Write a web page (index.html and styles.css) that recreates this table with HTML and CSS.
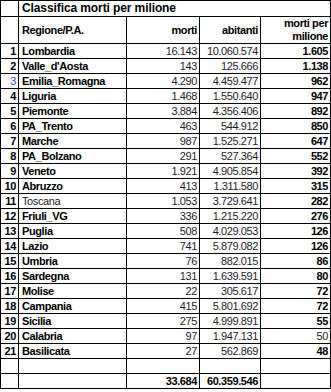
FILE: index.html
```html
<!DOCTYPE html>
<html lang="it">
<head>
<meta charset="utf-8">
<title>Classifica morti per milione</title>
<link rel="stylesheet" href="styles.css">
</head>
<body>
<table class="sheet">
  <colgroup>
    <col class="c-rank"><col class="c-name"><col class="c-morti"><col class="c-ab"><col class="c-pm">
  </colgroup>
  <tr class="title-row"><td class="blank"></td><td class="title" colspan="4">Classifica morti per milione</td></tr>
  <tr class="head-row">
    <td></td>
    <td class="b">Regione/P.A.</td>
    <td class="b num">morti</td>
    <td class="b num">abitanti</td>
    <td class="b num">morti per<br>milione</td>
  </tr>
  <tr><td class="rk">1</td><td class="b">Lombardia</td><td class="num">16.143</td><td class="num">10.060.574</td><td class="b num">1.605</td></tr>
  <tr><td class="rk">2</td><td class="b">Valle_d'Aosta</td><td class="num">143</td><td class="num">125.666</td><td class="b num">1.138</td></tr>
  <tr><td class="rk reg">3</td><td class="b">Emilia_Romagna</td><td class="num">4.290</td><td class="num">4.459.477</td><td class="b num">962</td></tr>
  <tr><td class="rk">4</td><td class="b">Liguria</td><td class="num">1.468</td><td class="num">1.550.640</td><td class="b num">947</td></tr>
  <tr><td class="rk">5</td><td class="b">Piemonte</td><td class="num">3.884</td><td class="num">4.356.406</td><td class="b num">892</td></tr>
  <tr><td class="rk">6</td><td class="b">PA_Trento</td><td class="num">463</td><td class="num">544.912</td><td class="b num">850</td></tr>
  <tr><td class="rk">7</td><td class="b">Marche</td><td class="num">987</td><td class="num">1.525.271</td><td class="b num">647</td></tr>
  <tr><td class="rk">8</td><td class="b">PA_Bolzano</td><td class="num">291</td><td class="num">527.364</td><td class="b num">552</td></tr>
  <tr><td class="rk">9</td><td class="b">Veneto</td><td class="num">1.921</td><td class="num">4.905.854</td><td class="b num">392</td></tr>
  <tr><td class="rk">10</td><td class="b">Abruzzo</td><td class="num">413</td><td class="num">1.311.580</td><td class="b num">315</td></tr>
  <tr><td class="rk">11</td><td>Toscana</td><td class="num">1.053</td><td class="num">3.729.641</td><td class="b num">282</td></tr>
  <tr><td class="rk">12</td><td class="b">Friuli_VG</td><td class="num">336</td><td class="num">1.215.220</td><td class="b num">276</td></tr>
  <tr><td class="rk">13</td><td class="b">Puglia</td><td class="num">508</td><td class="num">4.029.053</td><td class="b num">126</td></tr>
  <tr><td class="rk">14</td><td class="b">Lazio</td><td class="num">741</td><td class="num">5.879.082</td><td class="b num">126</td></tr>
  <tr><td class="rk">15</td><td class="b">Umbria</td><td class="num">76</td><td class="num">882.015</td><td class="b num">86</td></tr>
  <tr><td class="rk">16</td><td class="b">Sardegna</td><td class="num">131</td><td class="num">1.639.591</td><td class="b num">80</td></tr>
  <tr><td class="rk">17</td><td class="b">Molise</td><td class="num">22</td><td class="num">305.617</td><td class="b num">72</td></tr>
  <tr><td class="rk">18</td><td class="b">Campania</td><td class="num">415</td><td class="num">5.801.692</td><td class="b num">72</td></tr>
  <tr><td class="rk">19</td><td class="b">Sicilia</td><td class="num">275</td><td class="num">4.999.891</td><td class="b num">55</td></tr>
  <tr><td class="rk">20</td><td class="b">Calabria</td><td class="num">97</td><td class="num">1.947.131</td><td class="num">50</td></tr>
  <tr><td class="rk">21</td><td class="b">Basilicata</td><td class="num">27</td><td class="num">562.869</td><td class="b num">48</td></tr>
  <tr><td></td><td></td><td></td><td></td><td></td></tr>
  <tr class="total-row"><td></td><td></td><td class="b num">33.684</td><td class="b num">60.359.546</td><td></td></tr>
</table>
</body>
</html>
```

FILE: styles.css
```css
html, body {
  margin: 0;
  padding: 0;
  background: #ffffff;
}

.sheet {
  border-collapse: collapse;
  table-layout: fixed;
  width: 330px;
  font-family: "Liberation Sans", Arial, sans-serif;
  font-size: 11px;
  letter-spacing: -0.4px;
  color: #1c1c2a;
}

.c-rank { width: 18px; }
.c-name { width: 108px; }
.c-morti { width: 73px; }
.c-ab { width: 61px; }
.c-pm { width: 70px; }

.sheet td {
  border: 1px solid #000;
  height: 14px;
  padding: 0 2px 0 3px;
  line-height: 13px;
  white-space: nowrap;
  vertical-align: middle;
  overflow: hidden;
}

.sheet .title-row td {
  height: 15px;
}

.sheet .title-row .blank {
  border-right: 1px solid #000;
}

.sheet .title {
  font-weight: bold;
  font-size: 12px;
  letter-spacing: -0.1px;
  color: #000;
}

.sheet .head-row td {
  height: 26px;
}

.sheet .total-row td {
  height: 14px;
}

.b {
  font-weight: bold;
  color: #000;
}

.num {
  text-align: right;
}

.sheet td.num {
  padding: 0 2px 0 2px;
}

.sheet td.rk {
  text-align: right;
  font-weight: bold;
  color: #000;
  padding: 0 2px 0 0;
}

.sheet td.rk.reg {
  font-weight: normal;
  color: #2f5aa8;
}
```
